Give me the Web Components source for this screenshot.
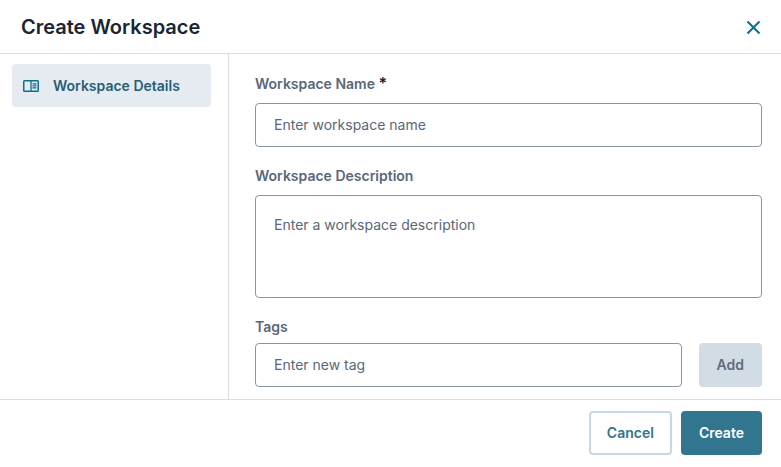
<!DOCTYPE html>
<html lang="en">
<head>
<meta charset="utf-8">
<title>Create Workspace</title>
<style>
html,body{margin:0;height:100%}
body{font-family:Inter,"Liberation Sans",sans-serif;background:#fff;color:#1b2533}
</style>
</head>
<body>
<workspace-dialog heading="Create Workspace">
  <nav-item slot="nav">Workspace Details</nav-item>
  <text-field label="Workspace Name" required placeholder="Enter workspace name"></text-field>
  <text-field label="Workspace Description" multiline placeholder="Enter a workspace description"></text-field>
  <text-field label="Tags" compact placeholder="Enter new tag"><action-button slot="action" kind="muted">Add</action-button></text-field>
  <action-button slot="footer" kind="outline">Cancel</action-button>
  <action-button slot="footer" kind="primary">Create</action-button>
</workspace-dialog>
<script>
class WorkspaceDialog extends HTMLElement {
  constructor() {
    super();
    this.attachShadow({mode: 'open'}).innerHTML = `
<style>
:host{display:flex;flex-direction:column;min-height:100%;box-sizing:border-box;background:#fff}
header{display:flex;align-items:center;justify-content:space-between;box-sizing:border-box;height:54px;padding:1px 20px 0 21px;border-bottom:1px solid #d5e0ea}
h1{margin:0;font-size:20px;line-height:28px;font-weight:600}
.close{display:flex;padding:0;border:0;background:none;cursor:pointer}
.body{flex:1;display:flex}
nav{box-sizing:border-box;flex:0 0 229px;padding:10px 17px 0 12px;border-right:1px solid #d5e0ea}
main{flex:1;min-width:0;padding:18px 19px 12px 26px;display:flex;flex-direction:column;gap:17px}
footer{display:flex;justify-content:flex-end;gap:9px;padding:11px 19px 12px;border-top:1px solid #d5e0ea}
</style>
<header><h1></h1><button class="close" aria-label="Close"><svg width="15" height="15" viewBox="0 0 15 15"><path d="M1.5 1.5 13.5 13.5M13.5 1.5 1.5 13.5" fill="none" stroke="#0f7491" stroke-width="2.2"/></svg></button></header>
<div class="body"><nav><slot name="nav"></slot></nav><main><slot></slot></main></div>
<footer><slot name="footer"></slot></footer>`;
    this.shadowRoot.querySelector('h1').textContent = this.getAttribute('heading');
  }
}
class NavItem extends HTMLElement {
  constructor() {
    super();
    this.attachShadow({mode: 'open'}).innerHTML = `
<style>
:host{display:block}
a{display:flex;align-items:center;gap:14px;box-sizing:border-box;height:43px;padding:0 11px;border-radius:4px;background:#e6ebf2;color:#265f74;font-size:14px;line-height:20px;font-weight:600;text-decoration:none;white-space:nowrap}
</style>
<a href="#details" aria-current="page"><svg width="16" height="12" viewBox="0 0 16 12" fill="none" stroke="#0f6f86"><rect x=".75" y=".75" width="14.5" height="10.5" rx=".8" stroke-width="1.5"/><path d="M8 1v10" stroke-width="1.3"/><path d="M9.5 3.9h4M9.5 5.9h4M9.5 7.9h4" stroke-width="1.1"/></svg><span><slot></slot></span></a>`;
  }
}
class TextField extends HTMLElement {
  constructor() {
    super();
    const multi = this.hasAttribute('multiline');
    this.attachShadow({mode: 'open'}).innerHTML = `
<style>
:host{display:block}
label{display:block;margin-bottom:7px;font-size:14px;line-height:24px;font-weight:600;color:#5a6779}
:host([compact]) label{margin-bottom:4px}
b{color:#1b2533;font-weight:600;font-size:16px;line-height:20px}
.row{display:flex;gap:17px}
input,textarea{display:block;box-sizing:border-box;flex:1;min-width:0;margin:0;border:1px solid #8896a7;border-radius:4px;background:#fff;color:#1b2533;font:400 14px/20px Inter,"Liberation Sans",sans-serif;outline:0}
input{height:44px;padding:0 18px 1px}
textarea{height:103px;padding:19px 18px;resize:none}
::placeholder{color:#5a6779;opacity:1}
</style>
<label for="field"><span></span></label>
<div class="row">${multi ? '<textarea id="field"></textarea>' : '<input id="field" type="text">'}<slot name="action"></slot></div>`;
    const root = this.shadowRoot;
    root.querySelector('span').textContent = this.getAttribute('label');
    root.querySelector('#field').placeholder = this.getAttribute('placeholder');
    if (this.hasAttribute('required')) {
      root.querySelector('label').insertAdjacentHTML('beforeend', ' <b>*</b>');
      root.querySelector('#field').required = true;
    }
  }
}
class ActionButton extends HTMLElement {
  constructor() {
    super();
    this.attachShadow({mode: 'open'}).innerHTML = `
<style>
:host{display:block}
button{display:block;box-sizing:border-box;height:44px;padding:0 16px;border:2px solid #32758f;border-radius:4px;background:#32758f;color:#fff;font:600 14px/20px Inter,"Liberation Sans",sans-serif;cursor:pointer}
:host([kind=outline]) button{background:#fff;border-color:#c2dae2;color:#32758f}
:host([kind=muted]) button{background:#d2dce5;border-color:#d2dce5;color:#5f6c7e}
</style>
<button type="button"><slot></slot></button>`;
  }
}
customElements.define('action-button', ActionButton);
customElements.define('text-field', TextField);
customElements.define('nav-item', NavItem);
customElements.define('workspace-dialog', WorkspaceDialog);
</script>
</body>
</html>
